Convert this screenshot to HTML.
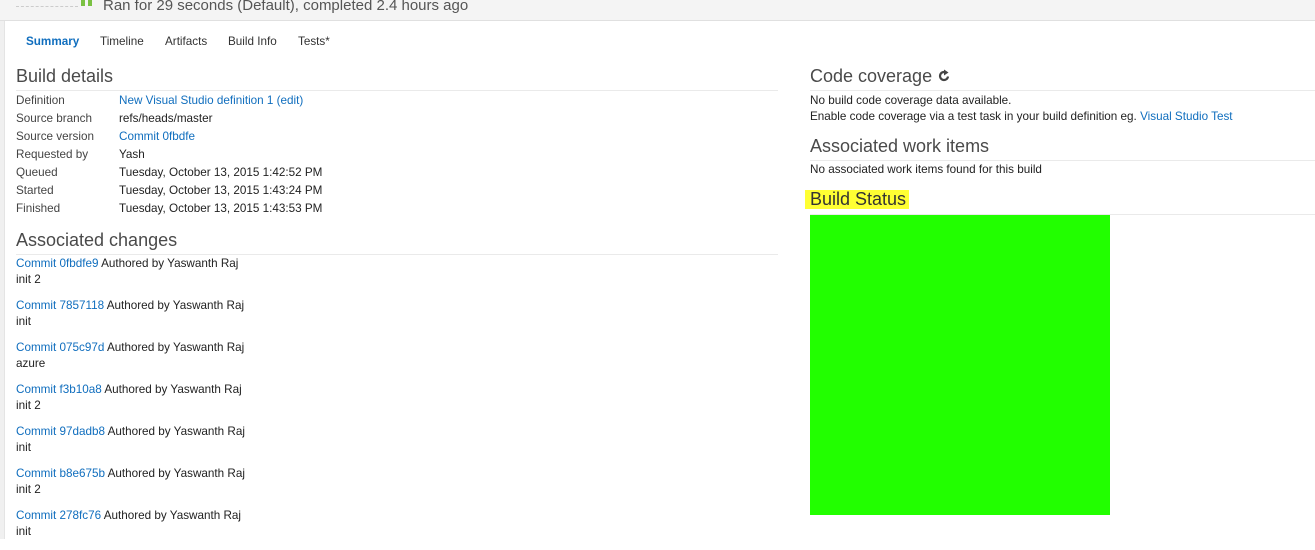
<!DOCTYPE html>
<html><head><meta charset="utf-8"><style>
*{margin:0;padding:0;box-sizing:border-box}
body{width:1315px;height:539px;overflow:hidden;background:#fff;font-family:"Liberation Sans",sans-serif;font-size:11.7px;color:#222;position:relative}
.a{color:#106ebe}
.top{position:absolute;left:0;top:0;width:1315px;height:21px;background:#f4f4f4;border-bottom:1px solid #e0e0e0}
.strip{position:absolute;left:0;top:21px;width:5px;height:518px;background:#f0f0f0;border-right:1px solid #e4e4e4}
.abs{position:absolute;white-space:nowrap}
h2{position:absolute;font-weight:normal;font-size:18px;color:#4a4a4a;white-space:nowrap}
.hr{position:absolute;height:1px;background:#eaeaea}
.tab{position:absolute;top:35px;font-size:11.7px;color:#333}
</style></head><body>
<div class="top"></div>
<div class="abs" style="left:16px;top:6px;width:62px;border-top:1px dashed #ccc"></div>
<div class="abs" style="left:81px;top:0;width:4px;height:6px;background:#7ac143"></div>
<div class="abs" style="left:88px;top:0;width:4px;height:6px;background:#7ac143"></div>
<div class="abs" style="left:103px;top:-3px;font-size:15px;color:#555">Ran for 29 seconds (Default), completed 2.4 hours ago</div>
<div class="strip"></div>
<div class="tab" style="left:26px;color:#106ebe;font-weight:bold">Summary</div>
<div class="tab" style="left:100px">Timeline</div>
<div class="tab" style="left:165px">Artifacts</div>
<div class="tab" style="left:228px">Build Info</div>
<div class="tab" style="left:298px">Tests*</div>

<h2 style="left:16px;top:66px">Build details</h2>
<div class="hr" style="left:16px;top:90px;width:762px"></div>
<div class="abs" style="left:16px;top:92px;line-height:18px;color:#444">Definition<br>Source branch<br>Source version<br>Requested by<br>Queued<br>Started<br>Finished</div>
<div class="abs" style="left:119px;top:92px;line-height:18px"><span class="a">New Visual Studio definition 1 (edit)</span><br>refs/heads/master<br><span class="a">Commit 0fbdfe</span><br>Yash<br>Tuesday, October 13, 2015 1:42:52 PM<br>Tuesday, October 13, 2015 1:43:24 PM<br>Tuesday, October 13, 2015 1:43:53 PM</div>

<h2 style="left:16px;top:230px">Associated changes</h2>
<div class="hr" style="left:16px;top:254px;width:762px"></div>
<div class="abs" style="left:16px;top:256px;line-height:16px">
<div style="height:42px"><span class="a">Commit 0fbdfe9</span> Authored by Yaswanth Raj<br>init 2</div>
<div style="height:42px"><span class="a">Commit 7857118</span> Authored by Yaswanth Raj<br>init</div>
<div style="height:42px"><span class="a">Commit 075c97d</span> Authored by Yaswanth Raj<br>azure</div>
<div style="height:42px"><span class="a">Commit f3b10a8</span> Authored by Yaswanth Raj<br>init 2</div>
<div style="height:42px"><span class="a">Commit 97dadb8</span> Authored by Yaswanth Raj<br>init</div>
<div style="height:42px"><span class="a">Commit b8e675b</span> Authored by Yaswanth Raj<br>init 2</div>
<div style="height:42px"><span class="a">Commit 278fc76</span> Authored by Yaswanth Raj<br>init</div>
</div>

<h2 style="left:810px;top:66px">Code coverage <svg width="14" height="14" viewBox="0 0 14 14" style="vertical-align:-1px"><path d="M11 7.5A4 4 0 1 1 8.5 3.3" fill="none" stroke="#444" stroke-width="2.2"/><path d="M7 0.5L11.5 3.5L7 6.5Z" fill="#444"/></svg></h2>
<div class="hr" style="left:810px;top:90px;width:505px"></div>
<div class="abs" style="left:810px;top:93px;line-height:16px">No build code coverage data available.<br>Enable code coverage via a test task in your build definition eg. <span class="a">Visual Studio Test</span></div>
<h2 style="left:810px;top:136px">Associated work items</h2>
<div class="hr" style="left:810px;top:160px;width:505px"></div>
<div class="abs" style="left:810px;top:163px">No associated work items found for this build</div>
<h2 style="left:805px;top:190px;background:#ffff33;color:#333;padding:0 3px 0 5px;line-height:19px">Build Status</h2>
<div class="hr" style="left:810px;top:214px;width:505px"></div>
<div class="abs" style="left:810px;top:215px;width:300px;height:300px;background:#22ff00"></div>
</body></html>
